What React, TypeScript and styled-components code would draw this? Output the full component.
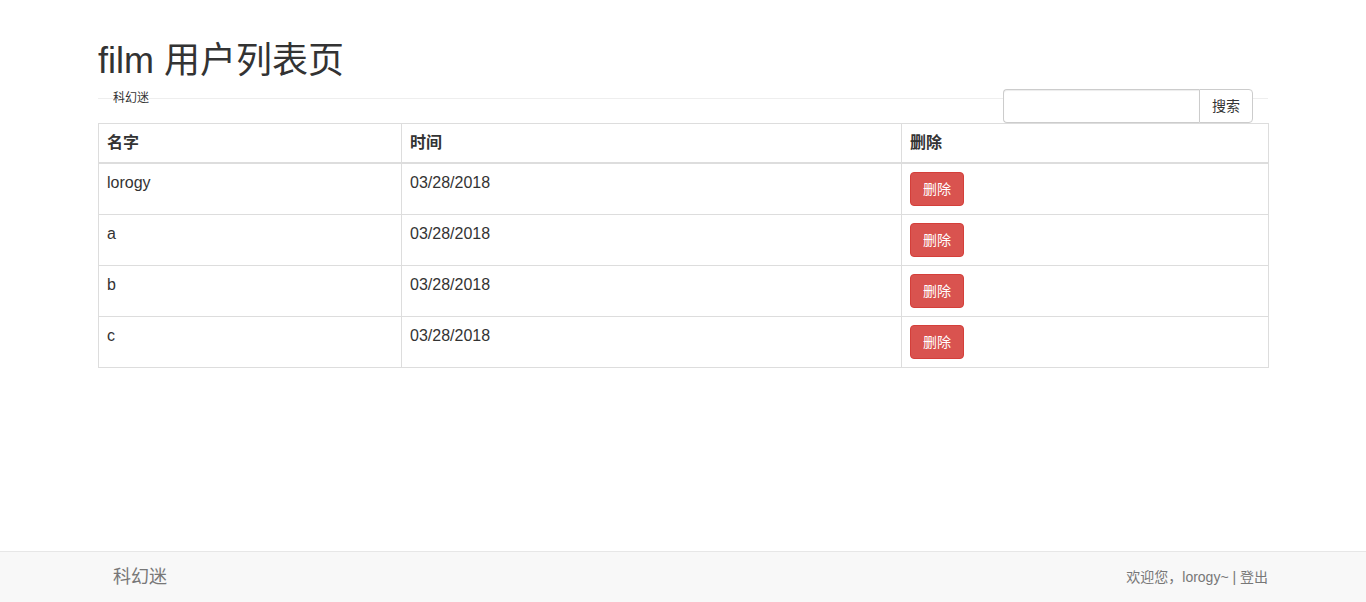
import React from "react";
import styled, { createGlobalStyle } from "styled-components";

const GlobalStyle = createGlobalStyle`
  html, body { margin: 0; padding: 0; }
  body {
    font-family: "Liberation Sans", "Noto Sans CJK SC", sans-serif;
    font-size: 14px;
    line-height: 1.42857;
    color: #333;
    background: #fff;
  }
  * { box-sizing: border-box; }
`;

const Page = styled.div`
  min-height: 100vh;
  display: flex;
  flex-direction: column;
`;

const Container = styled.main`
  width: 1170px;
  margin: 0 auto;
  padding-top: 41px;
`;

const Title = styled.h1`
  margin: 0;
  font-size: 36px;
  font-weight: 400;
  line-height: 39.6px;
  color: #333;
`;

const Toolbar = styled.div`
  margin-top: 8px;
  height: 34px;
  display: flex;
  justify-content: space-between;
  align-items: flex-start;
  background: linear-gradient(#eee, #eee) 0 9px / 100% 1px no-repeat;
`;

const Category = styled.span`
  margin-left: 15px;
  font-size: 12px;
  line-height: 18px;
  padding: 0;
  background: #fff;
  color: #333;
`;

const SearchGroup = styled.form`
  margin-right: 15px;
  display: flex;
  height: 34px;
`;

const SearchInput = styled.input`
  width: 196px;
  height: 34px;
  border: 1px solid #ccc;
  border-right: none;
  border-radius: 4px 0 0 4px;
  padding: 6px 12px;
  font-size: 14px;
  box-shadow: inset 0 1px 1px rgba(0, 0, 0, 0.075);
  outline: none;
  background: #fff;
`;

const SearchButton = styled.button`
  width: 54px;
  height: 34px;
  border: 1px solid #ccc;
  border-radius: 0 4px 4px 0;
  background: #fff;
  color: #333;
  font-family: "Liberation Sans", "Noto Sans CJK SC", sans-serif;
  font-size: 14px;
  line-height: 20px;
  padding: 6px 12px;
`;

const Table = styled.table`
  width: 1170px;
  table-layout: fixed;
  border-collapse: collapse;
  border: 1px solid #ddd;
  font-size: 16px;
  line-height: 1.42857;
`;

const Th = styled.th`
  text-align: left;
  font-weight: 700;
  padding: 8px;
  border: 1px solid #ddd;
  border-bottom: 2px solid #ddd;
  vertical-align: bottom;
`;

const Td = styled.td`
  padding: 8px;
  border: 1px solid #ddd;
  vertical-align: top;
`;

const DangerButton = styled.button`
  height: 34px;
  padding: 6px 12px;
  border: 1px solid #d43f3a;
  border-radius: 4px;
  background: #d9534f;
  color: #fff;
  font-family: "Liberation Sans", "Noto Sans CJK SC", sans-serif;
  font-size: 14px;
  line-height: 20px;
  vertical-align: top;
`;

const Footer = styled.footer`
  margin-top: auto;
  height: 51px;
  background: #f8f8f8;
  border-top: 1px solid #e7e7e7;
`;

const FooterInner = styled.div`
  width: 1170px;
  height: 50px;
  margin: 0 auto;
  display: flex;
  align-items: center;
  justify-content: space-between;
`;

const Brand = styled.a`
  padding: 0 15px;
  font-size: 18px;
  line-height: 20px;
  color: #777;
  text-decoration: none;
`;

const UserInfo = styled.span`
  font-size: 14px;
  line-height: 20px;
  color: #777;
`;

const rows = [
  { name: "lorogy", time: "03/28/2018" },
  { name: "a", time: "03/28/2018" },
  { name: "b", time: "03/28/2018" },
  { name: "c", time: "03/28/2018" },
];

export default function App() {
  return (
    <Page>
      <GlobalStyle />
      <Container>
        <Title>film 用户列表页</Title>
        <Toolbar>
          <Category>科幻迷</Category>
          <SearchGroup onSubmit={(e) => e.preventDefault()}>
            <SearchInput type="text" />
            <SearchButton type="submit">搜索</SearchButton>
          </SearchGroup>
        </Toolbar>
        <Table>
          <colgroup>
            <col style={{ width: 303 }} />
            <col style={{ width: 500 }} />
            <col style={{ width: 367 }} />
          </colgroup>
          <thead>
            <tr>
              <Th>名字</Th>
              <Th>时间</Th>
              <Th>删除</Th>
            </tr>
          </thead>
          <tbody>
            {rows.map((r) => (
              <tr key={r.name}>
                <Td>{r.name}</Td>
                <Td>{r.time}</Td>
                <Td>
                  <DangerButton type="button">删除</DangerButton>
                </Td>
              </tr>
            ))}
          </tbody>
        </Table>
      </Container>
      <Footer>
        <FooterInner>
          <Brand href="#">科幻迷</Brand>
          <UserInfo>欢迎您，lorogy~ | 登出</UserInfo>
        </FooterInner>
      </Footer>
    </Page>
  );
}
